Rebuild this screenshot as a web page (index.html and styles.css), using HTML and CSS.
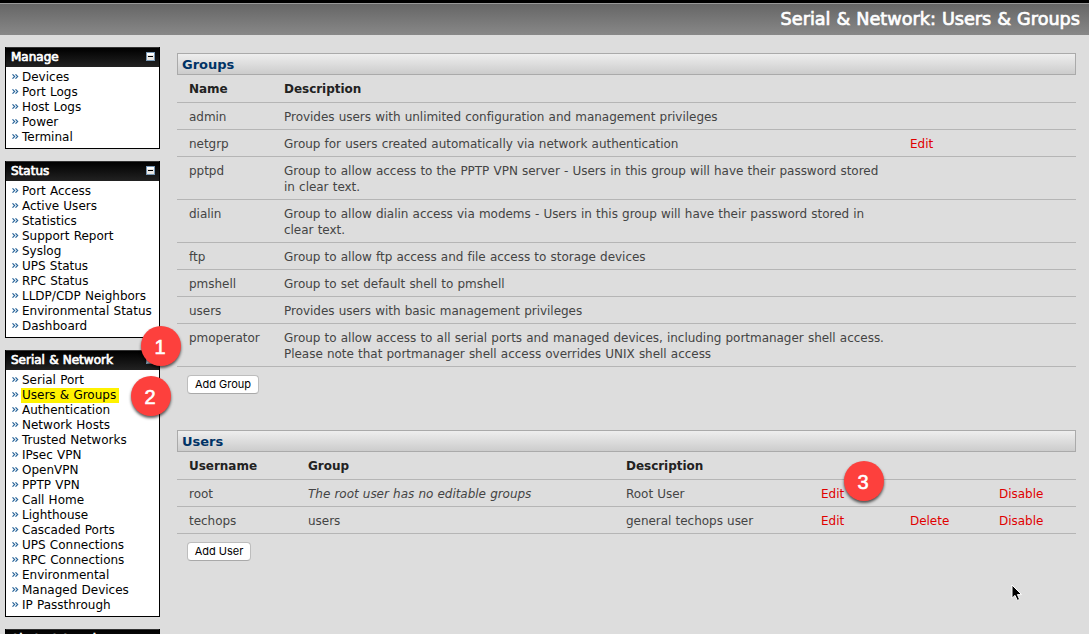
FILE: index.html
```html
<!DOCTYPE html>
<html lang="en">
<head>
<meta charset="utf-8">
<title>Serial &amp; Network: Users &amp; Groups</title>
<link rel="stylesheet" href="styles.css">
</head>
<body>
<svg class="defs" width="0" height="0" aria-hidden="true">
  <symbol id="minus" viewBox="0 0 9 9"><rect x=".5" y=".5" width="8" height="8" fill="#e9e7e4" stroke="#7898b5"/><path d="M1 1.5h7M1 2.5h7" stroke="#fff"/><path d="M2 4.5h5" stroke="#000"/></symbol>
</svg>
<header class="banner"><h1>Serial &amp; Network: Users &amp; Groups</h1></header>
<div class="layout">
  <nav class="sidebar">
    <section class="menu">
      <h2>Manage<svg class="toggle"><use href="#minus"/></svg></h2>
      <ul><li>Devices</li><li>Port Logs</li><li>Host Logs</li><li>Power</li><li>Terminal</li></ul>
    </section>
    <section class="menu">
      <h2>Status<svg class="toggle"><use href="#minus"/></svg></h2>
      <ul><li>Port Access</li><li>Active Users</li><li>Statistics</li><li>Support Report</li><li>Syslog</li><li>UPS Status</li><li>RPC Status</li><li>LLDP/CDP Neighbors</li><li>Environmental Status</li><li>Dashboard</li></ul>
    </section>
    <section class="menu">
      <h2>Serial &amp; Network<svg class="toggle"><use href="#minus"/></svg></h2>
      <ul><li>Serial Port</li><li><span class="current">Users &amp; Groups</span></li><li>Authentication</li><li>Network Hosts</li><li>Trusted Networks</li><li>IPsec VPN</li><li>OpenVPN</li><li>PPTP VPN</li><li>Call Home</li><li>Lighthouse</li><li>Cascaded Ports</li><li>UPS Connections</li><li>RPC Connections</li><li>Environmental</li><li>Managed Devices</li><li>IP Passthrough</li></ul>
    </section>
    <section class="menu">
      <h2>Alerts &amp; Logging</h2>
    </section>
  </nav>
  <main class="content">
    <section class="panel">
      <h3>Groups</h3>
      <div class="row groups head"><span>Name</span><span>Description</span></div>
      <div class="row groups"><span>admin</span><span>Provides users with unlimited configuration and management privileges</span></div>
      <div class="row groups"><span>netgrp</span><span>Group for users created automatically via network authentication</span><a>Edit</a></div>
      <div class="row groups"><span>pptpd</span><span>Group to allow access to the PPTP VPN server - Users in this group will have their password stored in clear text.</span></div>
      <div class="row groups"><span>dialin</span><span>Group to allow dialin access via modems - Users in this group will have their password stored in clear text.</span></div>
      <div class="row groups"><span>ftp</span><span>Group to allow ftp access and file access to storage devices</span></div>
      <div class="row groups"><span>pmshell</span><span>Group to set default shell to pmshell</span></div>
      <div class="row groups"><span>users</span><span>Provides users with basic management privileges</span></div>
      <div class="row groups"><span>pmoperator</span><span>Group to allow access to all serial ports and managed devices, including portmanager shell access.<br>Please note that portmanager shell access overrides UNIX shell access</span></div>
      <button class="add add-group">Add Group</button>
    </section>
    <section class="panel">
      <h3>Users</h3>
      <div class="row users head"><span>Username</span><span>Group</span><span>Description</span></div>
      <div class="row users"><span>root</span><em>The root user has no editable groups</em><span>Root User</span><a>Edit</a><span></span><a>Disable</a></div>
      <div class="row users"><span>techops</span><span>users</span><span>general techops user</span><a>Edit</a><a>Delete</a><a>Disable</a></div>
      <button class="add add-user">Add User</button>
    </section>
  </main>
</div>
<div class="marker one">1</div>
<div class="marker two">2</div>
<div class="marker three">3</div>
<svg class="cursor" viewBox="0 0 12 18"><path d="M1 1v13.2l3-2.8 2.3 5 2.3-1-2.2-4.8H10.6z" fill="#000" stroke="#fff"/></svg>
</body>
</html>
```
FILE: styles.css
```css
* { box-sizing: border-box; }
body {
  margin: 0;
  height: 634px;
  overflow: hidden;
  position: relative;
  background: #ddd;
  color: #444;
  font: 12px/16px Verdana, "DejaVu Sans", sans-serif;
  word-spacing: .034em;
}
h1, h2, h3, ul { margin: 0; padding: 0; font-weight: 400; }
.defs { position: absolute; }
.banner {
  height: 35px;
  border-top: 3px solid #000;
  background: linear-gradient(#999 0, #999 1px, #666 1px, #888);
  padding: 4px 9px 0 0;
  text-align: right;
  color: #fff;
}
.banner h1 {
  font-size: 17.65px;
  line-height: 24px;
  -webkit-text-stroke: .7px #fff;
}
.layout { display: flex; gap: 17px; padding: 12px 13px 0 5px; }
.sidebar { width: 155px; flex: none; display: flex; flex-direction: column; gap: 12px; }
.menu { border: 1px solid #000; background: #fff; }
.menu h2 {
  display: flex;
  justify-content: space-between;
  align-items: flex-start;
  height: 19px;
  padding: 1px 4px 0 5px;
  background: linear-gradient(#000, #222);
  box-shadow: 0 -1px #333;
  color: #fff;
  font-size: 12px;
  line-height: 17px;
  white-space: nowrap;
  -webkit-text-stroke: .7px #fff;
}
.toggle { width: 9px; height: 9px; margin-top: 3px; }
.menu ul { list-style: none; padding: 3px 0 3px 5px; color: #000; }
.menu li { height: 15px; line-height: 15px; display: flex; white-space: nowrap; }
.menu li::before {
  content: "";
  width: 11px;
  flex: none;
  background: url("data:image/svg+xml,%3Csvg xmlns='http://www.w3.org/2000/svg' width='7' height='5'%3E%3Cpath d='M.5 .3L2.7 2.5L.5 4.7M3.5 .3L5.7 2.5L3.5 4.7' fill='none' stroke='%23266399' stroke-width='1.1'/%3E%3C/svg%3E") 1px 4px no-repeat;
}
.current { background: #fff200; margin-left: -1px; padding: 0 3px 0 1px; }
.content { flex: 1; padding-top: 6px; }
.panel h3 {
  height: 22px;
  border: 1px solid #aaa;
  background: linear-gradient(#eee, #ccc);
  padding: 1px 0 0 4px;
  font-size: 13px;
  font-weight: 700;
  line-height: 20px;
  color: #036;
}
.row {
  display: grid;
  padding: 6px 0 4px 12px;
  border-bottom: 1px solid #b5b5b5;
  letter-spacing: -.03px;
}
.row.head { padding: 6px 0 5px 12px; font-weight: 700; color: #222; }
.groups { grid-template-columns: 95px 602px 1fr; }
.groups a { padding-left: 24px; }
.users { grid-template-columns: 119px 318px 195px 89px 89px 1fr; }
.row a { color: #e00000; }
.add {
  display: block;
  height: 19px;
  margin: 8px 0 36px 10px;
  padding: 0 0 1px;
  border: 1px solid #bdbdbd;
  border-bottom-color: #a9a9a9;
  border-radius: 4px;
  background: #fff;
  color: #000;
  font: 11px/16px Inter, sans-serif;
}
.add-group { width: 72px; }
.add-user { width: 64px; }
.marker {
  position: absolute;
  width: 40px;
  height: 40px;
  border-radius: 50%;
  background: #fd403d;
  box-shadow: 0 2px 3px rgba(0, 0, 0, .65);
  color: #fff;
  font: 20px/42px "Liberation Sans", sans-serif;
  text-align: center;
  padding-right: 2px;
  -webkit-text-stroke: .6px #fff;
}
.one { left: 141px; top: 326px; }
.two { left: 131px; top: 376px; }
.three { left: 844px; top: 461px; }
.cursor { position: absolute; left: 1011px; top: 584px; width: 12px; height: 18px; }
```
